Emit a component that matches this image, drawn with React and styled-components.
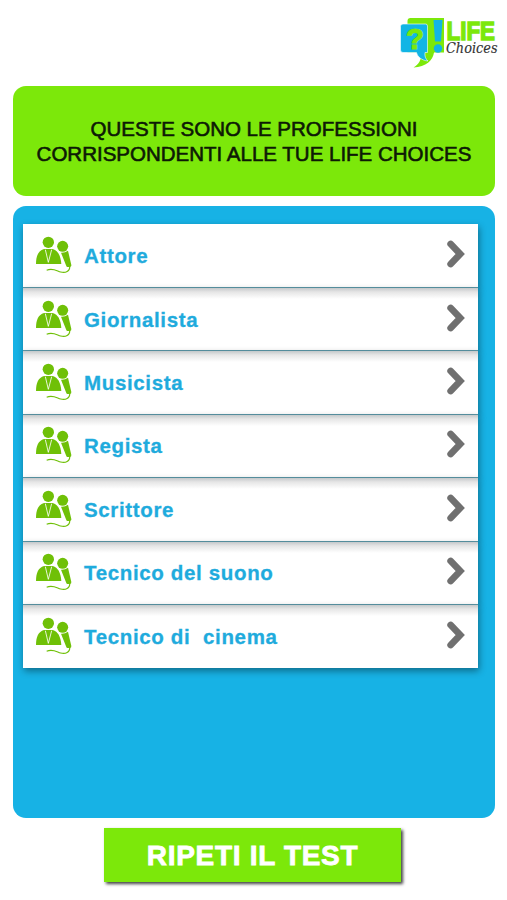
import React from 'react';
import styled, { createGlobalStyle } from 'styled-components';

const professions = [
  'Attore',
  'Giornalista',
  'Musicista',
  'Regista',
  'Scrittore',
  'Tecnico del suono',
  'Tecnico di  cinema',
];

const Logo = () => (
  <LogoSvg viewBox="0 0 100 56">
    <path d="M10.500 2H44v34.500H34C33 44 26 51 13.500 51.500C19 48 21.500 44 21.500 36.500H7.500V5Q7.500 2 10.500 2Z" fill="#7ce80a" />
    <path d="M3 8H25.500Q27.500 8 27.500 10V36.500H25C24.500 40 25.500 43 28 45C22 44.500 17.500 41 16.500 36.500H3Q.500 36.500 .500 34V10.500Q.500 8 3 8Z" fill="#12b5e5" stroke="#fff" strokeWidth=".6" />
    <path d="M33.500 4H42.500L41 25.500H35Z" fill="#12b5e5" />
    <circle cx="38" cy="32.500" r="4.200" fill="#12b5e5" />
    <text x="6" y="33" fontSize="30" fontWeight="700" fontFamily="Liberation Sans, sans-serif" fill="#7ce80a" stroke="#7ce80a" strokeWidth="1.2" textLength="18" lengthAdjust="spacingAndGlyphs">?</text>
    <text x="46.500" y="24" fontSize="26" fontWeight="700" fontFamily="Liberation Sans, sans-serif" fill="#7ce80a" stroke="#7ce80a" strokeWidth="1.5" textLength="48.500" lengthAdjust="spacingAndGlyphs">LIFE</text>
    <text x="46" y="37.300" fontSize="14" fontStyle="italic" fontFamily="DejaVu Serif, serif" fill="#333" stroke="#333" strokeWidth=".15" textLength="51.500" lengthAdjust="spacingAndGlyphs">Choices</text>
  </LogoSvg>
);

const InterviewIcon = () => (
  <IconSvg viewBox="36 34 108 114" fill="#6fc007">
    <circle cx="73" cy="53" r="17" />
    <path d="M36 118C36 94 43 78 60 73H86C102 77 110 93 112 118Z" />
    <path d="M64 75L73 113L83 75" fill="none" stroke="#fff" strokeWidth="2.500" />
    <circle cx="116" cy="65" r="19" fill="#fff" />
    <path d="M107 80L137 72L144 127H123Z" fill="#fff" />
    <circle cx="116" cy="65" r="16.500" />
    <path d="M111 84Q122 85 132 78L142 121Q143 127 137 127H130Q127 127 126 122Z" />
    <path d="M68 137C85 129 97 138 110 142C124 146 139 140 137 124" fill="none" stroke="#6fc007" strokeWidth="3.500" />
  </IconSvg>
);

const Chevron = () => (
  <ChevronSvg viewBox="0 0 18 28">
    <path d="M3.700 4L13.200 14L3.700 24" />
  </ChevronSvg>
);

const App = () => (
  <>
    <GlobalStyle />
    <Page>
      <Header>
        <Logo />
      </Header>
      <Title>
        <TitleLine>QUESTE SONO LE PROFESSIONI</TitleLine>
        <TitleLine>CORRISPONDENTI ALLE TUE LIFE CHOICES</TitleLine>
      </Title>
      <Panel>
        <List>
          {professions.map(name => (
            <Row key={name}>
              <InterviewIcon />
              <Name>{name}</Name>
              <Chevron />
            </Row>
          ))}
        </List>
      </Panel>
      <RepeatButton>RIPETI IL TEST</RepeatButton>
    </Page>
  </>
);

const GlobalStyle = createGlobalStyle`
  * {
    box-sizing: border-box;
  }
  body {
    margin: 0;
    background: #fff;
    font-family: 'Liberation Sans', Arial, sans-serif;
  }
`;

const Page = styled.div`
  height: 900px;
  padding: 0 12px 0 13px;
  display: flex;
  flex-direction: column;
  overflow: hidden;
`;

const Header = styled.header`
  height: 86px;
  flex-shrink: 0;
  display: flex;
  justify-content: flex-end;
  padding-top: 16px;
  margin-right: -5px;
`;

const LogoSvg = styled.svg`
  width: 100px;
  height: 56px;
  overflow: visible;
`;

const Title = styled.h1`
  height: 110px;
  flex-shrink: 0;
  margin: 0 0 10px;
  padding-top: 1px;
  display: flex;
  flex-direction: column;
  align-items: center;
  justify-content: center;
  border-radius: 13px;
  background: #7ce80a;
  color: #0d1a05;
  font-size: 20.500px;
  font-weight: 400;
  line-height: 24.500px;
`;

const TitleLine = styled.span`
  white-space: nowrap;
  -webkit-text-stroke: 0.6px #0d1a05;
`;

const Panel = styled.main`
  height: 612px;
  flex-shrink: 0;
  padding: 18px 17px 0 10px;
  border-radius: 13px;
  background: #17b2e5;
`;

const List = styled.ul`
  margin: 0;
  padding: 0;
  list-style: none;
`;

const Row = styled.li`
  position: relative;
  height: 63.400px;
  padding: 0 13px;
  display: flex;
  align-items: center;
  background: #fff;
  border-bottom: 1px solid #5b98a8;
  box-shadow: 1px 3px 7px rgba(0, 0, 0, 0.4);

  &:first-child {
    height: 64px;
  }
  &:not(:first-child) {
    background: linear-gradient(#c4c8ca, #e6e6e6 4px, #fff 11px);
  }
  &:last-child {
    border-bottom: 0;
  }
`;

const IconSvg = styled.svg`
  width: 36px;
  height: 38px;
  flex-shrink: 0;
  margin-top: -1px;
`;

const Name = styled.span`
  flex: 1;
  margin-left: 12px;
  padding-top: 1px;
  white-space: pre;
  color: #1fabdd;
  font-size: 20.500px;
  font-weight: 700;
  letter-spacing: 0.650px;
  -webkit-text-stroke: 0.3px #1fabdd;
`;

const ChevronSvg = styled.svg`
  width: 18px;
  height: 28px;
  flex-shrink: 0;
  margin-top: -3px;
  fill: none;
  stroke: #707070;
  stroke-width: 6.800;
  stroke-linecap: round;
  stroke-linejoin: miter;
`;

const RepeatButton = styled.button`
  width: 297px;
  height: 54px;
  flex-shrink: 0;
  align-self: flex-start;
  margin: 10px 0 0 91px;
  padding: 1px 0 0;
  border: 0;
  background: #7ce80a;
  box-shadow: 2px 2px 3px rgba(0, 0, 0, 0.75);
  color: #fff;
  font: 700 28px 'Liberation Sans', Arial, sans-serif;
  letter-spacing: 0.700px;
  -webkit-text-stroke: 0.8px #fff;
`;

export default App;
